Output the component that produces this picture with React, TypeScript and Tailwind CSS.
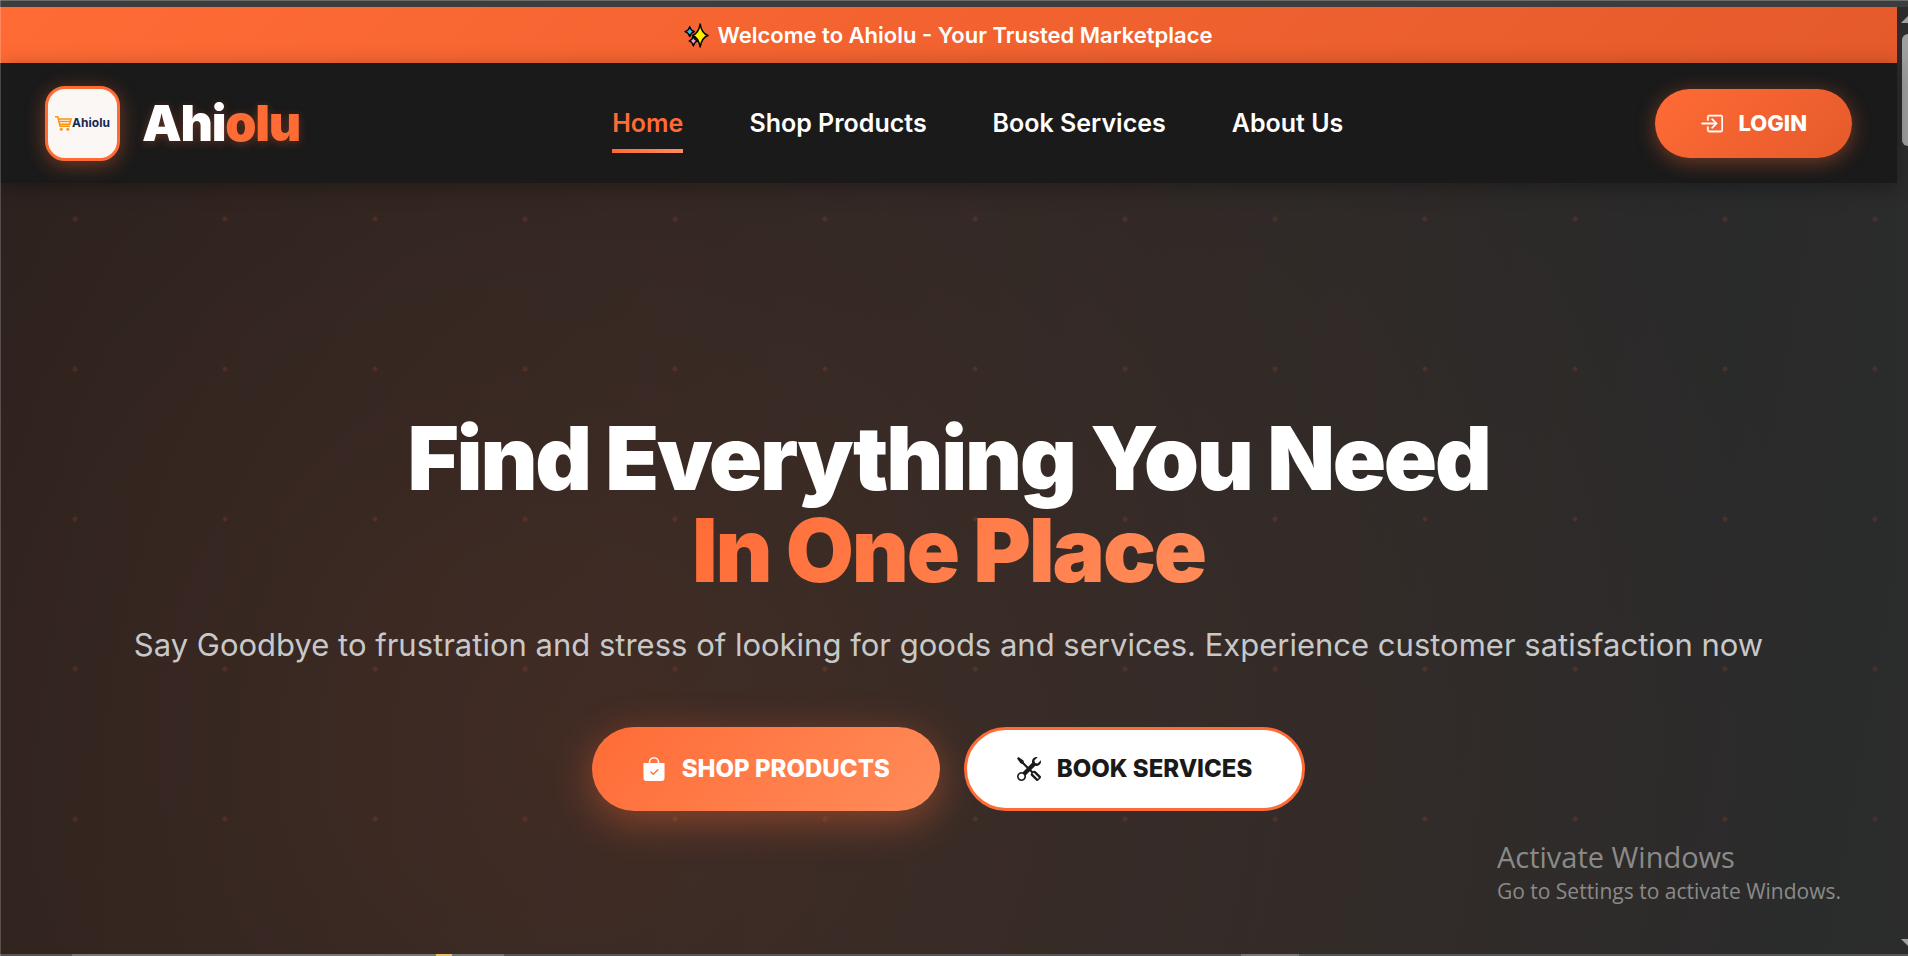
import { BsBagCheckFill, BsBoxArrowInRight, BsTools } from 'react-icons/bs'

const navLinks = [
  { label: 'Home', active: true },
  { label: 'Shop Products' },
  { label: 'Book Services' },
  { label: 'About Us' },
]

function Sparkles() {
  return (
    <svg viewBox="0 0 24 24" className="size-[25px] shrink-0" stroke="#000" strokeWidth="1.4" strokeLinejoin="round" aria-hidden="true">
      <path d="M5.500 3.500Q6.500 7.300 10 8.300Q6.500 9.300 5.500 13Q4.500 9.300 1 8.300Q4.500 7.300 5.500 3.500z" fill="#35b9e8" />
      <path d="M9 12.500Q10 16.200 13 17.200Q10 18.200 9 22Q8 18.200 5 17.200Q8 16.200 9 12.500z" fill="#f59ad0" />
      <path d="M15.500 1Q17 10 23 12Q17 14 15.500 23Q14 14 8 12Q14 10 15.500 1z" fill="#fff000" />
    </svg>
  )
}

function LogoBadge() {
  return (
    <div className="flex size-[75px] shrink-0 items-center justify-center rounded-[20px] border-3 border-[#ff6b35] bg-[#faf7f5] shadow-[0_4px_20px_rgba(255,107,53,0.4)]">
      <svg viewBox="0 0 17 15" className="h-[15px] w-[17px]" fill="none" stroke="#fb9214" strokeWidth="1.500" aria-hidden="true">
        <path d="M0 .8h2.800L5 10.300h10M3.300 3h12.700l-1.300 5.300H4.500M4 5.600h11.500" />
        <circle cx="6.300" cy="13.200" r="1.500" fill="#fb9214" stroke="none" />
        <circle cx="12.800" cy="13.200" r="1.500" fill="#fb9214" stroke="none" />
      </svg>
      <span className="text-[12px] leading-none font-bold text-[#14284f]">Ahiolu</span>
    </div>
  )
}

function Header() {
  return (
    <header className="relative z-10 flex h-[120px] items-center justify-between bg-[#1a1a1a] px-[45px] shadow-[0_4px_20px_rgba(0,0,0,0.3)]">
      <a href="#" className="flex items-center gap-[22px]">
        <LogoBadge />
        <span className="text-[50px] leading-none font-black tracking-tight text-white [text-shadow:0_2px_10px_rgba(255,107,53,0.3)]">
          Ahi<span className="text-[#ff6b35]">olu</span>
        </span>
      </a>
      <nav className="flex gap-[66px]">
        {navLinks.map((link) => (
          <a
            key={link.label}
            href="#"
            className={`relative py-3 text-[25px] leading-[36px] font-semibold ${link.active ? 'text-[#ff6b35]' : 'text-white'}`}
          >
            {link.label}
            {link.active && (
              <span className="absolute inset-x-0 bottom-0 h-1 bg-linear-to-r from-[#ff6b35] to-[#ff8c5a]" />
            )}
          </a>
        ))}
      </nav>
      <button className="flex h-[69px] items-center gap-[15px] rounded-full bg-linear-135 from-[#ff6b35] to-[#e55a2b] px-[45px] text-[22px] font-extrabold text-white shadow-[0_4px_20px_rgba(255,107,53,0.4)]">
        <BsBoxArrowInRight className="size-[23px] stroke-current stroke-[0.3]" />
        LOGIN
      </button>
    </header>
  )
}

function Hero() {
  return (
    <main className="flex flex-1 flex-col items-center bg-[radial-gradient(circle_at_center,rgba(255,107,53,0.12)_2px,transparent_3px),radial-gradient(ellipse_66%_160%_at_30%_72%,rgba(255,107,53,0.13),transparent),linear-gradient(100deg,#221e1d,#2b2c2c)] bg-[size:150px_150px,auto,auto] bg-[position:0_-39px,0_0,0_0] px-6 pt-[229px]">
      <h1 className="text-center text-[88px] leading-[92px] font-black tracking-tight text-white">
        Find Everything You Need
        <span className="mx-auto block w-fit bg-linear-135 from-[#ff6b35] to-[#ff8c5a] bg-clip-text text-transparent">
          In One Place
        </span>
      </h1>
      <p className="mt-[22px] text-center text-[31px] leading-[54px] text-[#c8c8c8]">
        Say Goodbye to frustration and stress of looking for goods and services. Experience customer satisfaction now
      </p>
      <div className="mt-[55px] flex gap-6">
        <button className="flex h-[84px] items-center gap-4 rounded-full bg-linear-135 from-[#ff6b35] to-[#ff8c5a] px-[50px] text-[24px] font-extrabold text-white shadow-[0_10px_40px_rgba(255,107,53,0.4)]">
          <BsBagCheckFill className="size-6" />
          SHOP PRODUCTS
        </button>
        <button className="flex h-[84px] items-center gap-4 rounded-full border-3 border-[#ff6b35] bg-white px-[50px] text-[24px] font-extrabold text-[#1a1a1a]">
          <BsTools className="size-6" />
          BOOK SERVICES
        </button>
      </div>
    </main>
  )
}

export default function App() {
  return (
    <div className="relative flex min-h-screen flex-col overflow-hidden bg-[#2c2c2c] font-[Inter,sans-serif]">
      <div className="h-[7px] border-t border-[#6b6d6b] bg-[#3c3d3c]" />
      <div className="flex flex-1">
        <div className="flex min-w-0 flex-1 flex-col">
          <div className="flex h-14 items-center justify-center gap-2 bg-linear-135 from-[#ff6b35] to-[#e55a2b] text-[22px] font-semibold text-white">
            <Sparkles />
            Welcome to Ahiolu - Your Trusted Marketplace
          </div>
          <Header />
          <Hero />
        </div>
        <div className="flex w-[11px] flex-col items-end overflow-hidden bg-[#2c2c2c]">
          <svg viewBox="0 0 7 7" className="mt-[9px] h-[7px] w-[7px]" fill="#a0a0a0" aria-hidden="true">
            <path d="M0 7L7 0V7z" />
          </svg>
          <div className="mt-[11px] h-28 w-[6px] rounded-l-md bg-[#9f9f9f]" />
          <svg viewBox="0 0 7 7" className="mt-auto mb-[10px] h-[7px] w-[7px]" fill="#a0a0a0" aria-hidden="true">
            <path d="M0 0H7V7z" />
          </svg>
        </div>
      </div>
      <div className="absolute inset-y-0 left-0 z-20 w-px bg-white/20" />
      <div className="absolute inset-x-0 bottom-0 flex h-[2px] bg-[#555] pl-[72px]">
        <div className="h-full w-[432px] bg-[#777]">
          <div className="ml-[364px] h-full w-4 bg-[#e9c06a]" />
        </div>
        <div className="ml-[737px] h-full w-[58px] bg-[#777]" />
      </div>
      <div className="absolute right-[67px] bottom-[51px] font-['Open_Sans',sans-serif] text-[#8b8a89]">
        <p className="text-[29px] leading-[40px]">Activate Windows</p>
        <p className="text-[21px] leading-[28px]">Go to Settings to activate Windows.</p>
      </div>
    </div>
  )
}
